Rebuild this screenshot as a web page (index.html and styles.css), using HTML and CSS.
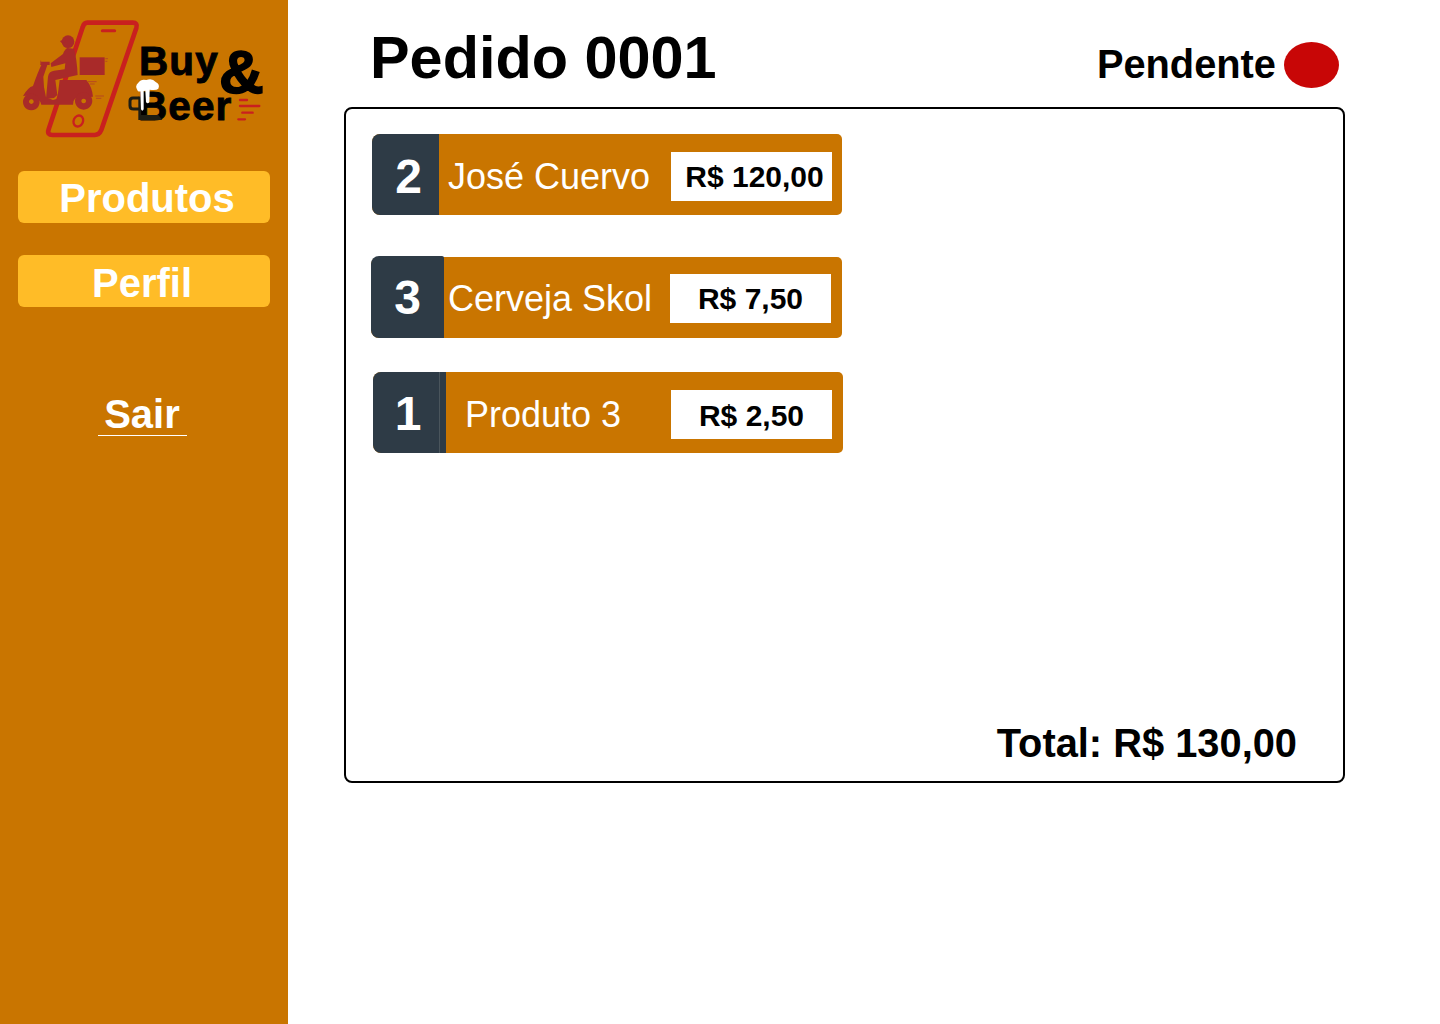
FILE: index.html
```html
<!DOCTYPE html>
<html lang="pt-BR">
<head>
<meta charset="utf-8">
<title>Pedido 0001</title>
<link rel="stylesheet" href="styles.css">
</head>
<body>
<div class="app">
  <aside class="sidebar">
    <svg class="logo" viewBox="0 0 288 150" width="288" height="150" aria-label="Buy & Beer">
      <text class="logo-word" x="139" y="75">Buy</text>
      <text class="logo-word" x="138" y="120">Beer</text>
      <text class="logo-amp" x="219" y="93">&amp;</text>
      <g transform="translate(10 10) scale(.3333)">
        <path class="phone" d="M232 38H368Q384 38 379 54L274 360Q268 375 254 375H128Q110 375 116 358L218 52Q222 38 232 38Z"/>
        <path class="phone-line" d="M277 62H314"/>
        <ellipse class="phone-btn" cx="205" cy="333" rx="14" ry="17" transform="rotate(25 205 333)"/>
      </g>
      <g class="rider" transform="translate(18 30) scale(.3333)">
        <circle cx="150" cy="35" r="19"/>
        <path d="M126 33L142 26V38H130Z"/>
        <path d="M148 54L168 56Q177 90 179 135L122 148L112 150L118 195L108 204L84 206L90 140Q92 124 108 122L140 118L142 100L100 111L98 100L135 72Q140 58 148 54Z"/>
        <rect x="185" y="82" width="75" height="53"/>
        <path d="M67 95H95V105H88L76 140Q76 170 84 202L105 210L118 206L125 150H205Q222 170 225 200L172 205Q165 212 165 224H70Q65 205 40 196L15 198Q30 172 45 168Q58 130 70 105H67Z"/>
        <path fill-rule="evenodd" d="M40 191A25 25 0 1 1 39.9 191ZM40 208A7 7 0 1 0 40.1 208Z"/>
        <path fill-rule="evenodd" d="M197 187A26 26 0 1 1 196.9 187ZM197 206A7 7 0 1 0 197.1 206Z"/>
        <path class="rider-line" d="M68 92V102M210 155H236M216 162H230M232 198H258M234 205H250M262 86H270M262 94H268"/>
      </g>
      <g transform="translate(125 40) scale(.3333)">
        <path class="mug-handle" d="M44 174H24Q15 174 15 183V197Q15 207 26 207H44"/>
        <path class="mug" d="M40 170H48V225H100L112 240H40Z"/>
        <path class="foam" d="M38 152Q28 138 40 128Q48 116 64 120Q82 114 92 126Q106 132 100 146Q94 152 74 149L73 186Q68 194 63 186L61 152L56 153L56 208Q52 216 48 208L46 154Q42 156 38 152Z"/>
        <path class="speed" d="M345 180H366M345 198H403M352 218H383M340 238H360"/>
      </g>
    </svg>
    <nav class="nav">
      <a class="nav-button nav-button-produtos">Produtos</a>
      <a class="nav-button nav-button-perfil">Perfil</a>
      <a class="logout">Sair</a>
    </nav>
  </aside>
  <main class="main">
    <header class="header">
      <h1 class="title">Pedido 0001</h1>
      <div class="status">
        <span class="status-label">Pendente</span>
        <span class="status-dot"></span>
      </div>
    </header>
    <section class="panel">
      <div class="row row-first">
        <div class="qty qty-first">2</div>
        <div class="name name-first">José Cuervo</div>
        <div class="price price-first">R$ 120,00</div>
      </div>
      <div class="row row-second">
        <div class="qty qty-second">3</div>
        <div class="name name-second">Cerveja Skol</div>
        <div class="price price-second">R$ 7,50</div>
      </div>
      <div class="row row-third">
        <div class="qty qty-third">1</div>
        <div class="name name-third">Produto 3</div>
        <div class="price price-third">R$ 2,50</div>
      </div>
      <div class="total">Total: R$ 130,00</div>
    </section>
  </main>
</div>
</body>
</html>
```
FILE: styles.css
```css
* { box-sizing: border-box; }
html, body { margin: 0; padding: 0; background: #fff; }
body { font-family: "Liberation Sans", Arial, sans-serif; color: #000; }
.app { display: flex; height: 1024px; overflow: hidden; }

.sidebar { width: 288px; flex: none; background: #c97500; }
.logo { display: block; }
.logo-word { font: 700 40.5px "Liberation Sans", sans-serif; letter-spacing: 1.1px; fill: #000; stroke: #000; stroke-width: .9; }
.logo-amp { font: 700 62px "Liberation Sans", sans-serif; fill: #000; stroke: #000; stroke-width: 1.6; }
.phone { fill: none; stroke: #c9201f; stroke-width: 14; stroke-linejoin: round; }
.phone-line { stroke: #c9201f; stroke-width: 9; stroke-linecap: round; }
.phone-btn { fill: none; stroke: #c9201f; stroke-width: 7; }
.rider { fill: #a92a29; }
.rider-line { fill: none; stroke: #b8481f; stroke-width: 3; }
.mug { fill: #1d1d14; }
.mug-handle { fill: none; stroke: #1d1d14; stroke-width: 9; }
.foam { fill: #fff; }
.speed { fill: none; stroke: #c9201f; stroke-width: 7; stroke-linecap: round; }

.nav { display: flex; flex-direction: column; padding: 21px 18px 0; }
.nav-button {
  display: block;
  height: 52px;
  background: #ffbc27;
  border-radius: 6px;
  color: #fff;
  font-size: 40px;
  font-weight: 700;
  line-height: 54px;
  text-align: center;
}
.nav-button-produtos { padding-left: 6px; }
.nav-button-perfil { margin-top: 32px; padding-right: 4px; line-height: 56px; }
.logout {
  align-self: center;
  margin: 85px 0 0 -4px;
  width: 89px;
  height: 44px;
  border-bottom: 1px solid #fff;
  color: #fff;
  font-size: 40px;
  font-weight: 700;
  line-height: 44px;
  text-align: center;
}

.main { flex: 1; padding-left: 56px; }
.header {
  display: flex;
  justify-content: space-between;
  width: 1001px;
  height: 107px;
  padding-left: 26px;
}
.title { margin: 24px 0 0; font-size: 59.4px; font-weight: 700; line-height: 68px; }
.status { display: flex; align-items: flex-start; padding: 42px 6px 0 0; }
.status-label { font-size: 39.8px; font-weight: 700; line-height: 44px; margin-right: 8px; }
.status-dot { width: 55px; height: 46px; border-radius: 50%; background: #c80606; }

.panel {
  display: flex;
  flex-direction: column;
  width: 1001px;
  height: 676px;
  padding: 25px 46px 15px 26px;
  border: 2px solid #000;
  border-radius: 8px;
}
.row {
  display: flex;
  align-items: stretch;
  width: 470px;
  height: 81px;
  background: #c97500;
  border-radius: 8px 5px 5px 8px;
}
.row-second { margin: 42px 0 0 -1px; width: 471px; }
.row-third { margin: 34px 0 0 1px; }
.qty {
  flex: none;
  background: #2e3b46;
  border-radius: 8px 0 0 8px;
  color: #fff;
  font-size: 48px;
  font-weight: 700;
  line-height: 84px;
  text-align: center;
}
.qty-first { width: 67px; padding-left: 6px; line-height: 86px; }
.qty-second { width: 73px; height: 82px; margin-top: -1px; border-radius: 8px 2px 0 8px; }
.qty-third { width: 73px; padding: 0 3px 0 0; background: linear-gradient(to right, #2e3b46 66px, #4a555c 66px, #4a555c 67px, #2e3b46 67px); }
.name { flex: 1; color: #fff; font-size: 36px; line-height: 84px; white-space: nowrap; }
.name-first { padding-left: 9px; line-height: 86px; }
.name-second { padding-left: 4px; }
.name-third { padding-left: 19px; line-height: 86px; }
.price {
  flex: none;
  align-self: flex-start;
  width: 161px;
  height: 49px;
  margin: 18px 10px 0 0;
  background: #fff;
  font-size: 30px;
  font-weight: 700;
  line-height: 50px;
  text-align: center;
}
.price-first { padding-left: 6px; }
.price-second { margin-top: 17px; margin-right: 11px; }
.price-third { margin-right: 11px; line-height: 52px; }
.total {
  margin-top: auto;
  font-size: 39.85px;
  font-weight: 700;
  line-height: 46px;
  text-align: right;
}
```
